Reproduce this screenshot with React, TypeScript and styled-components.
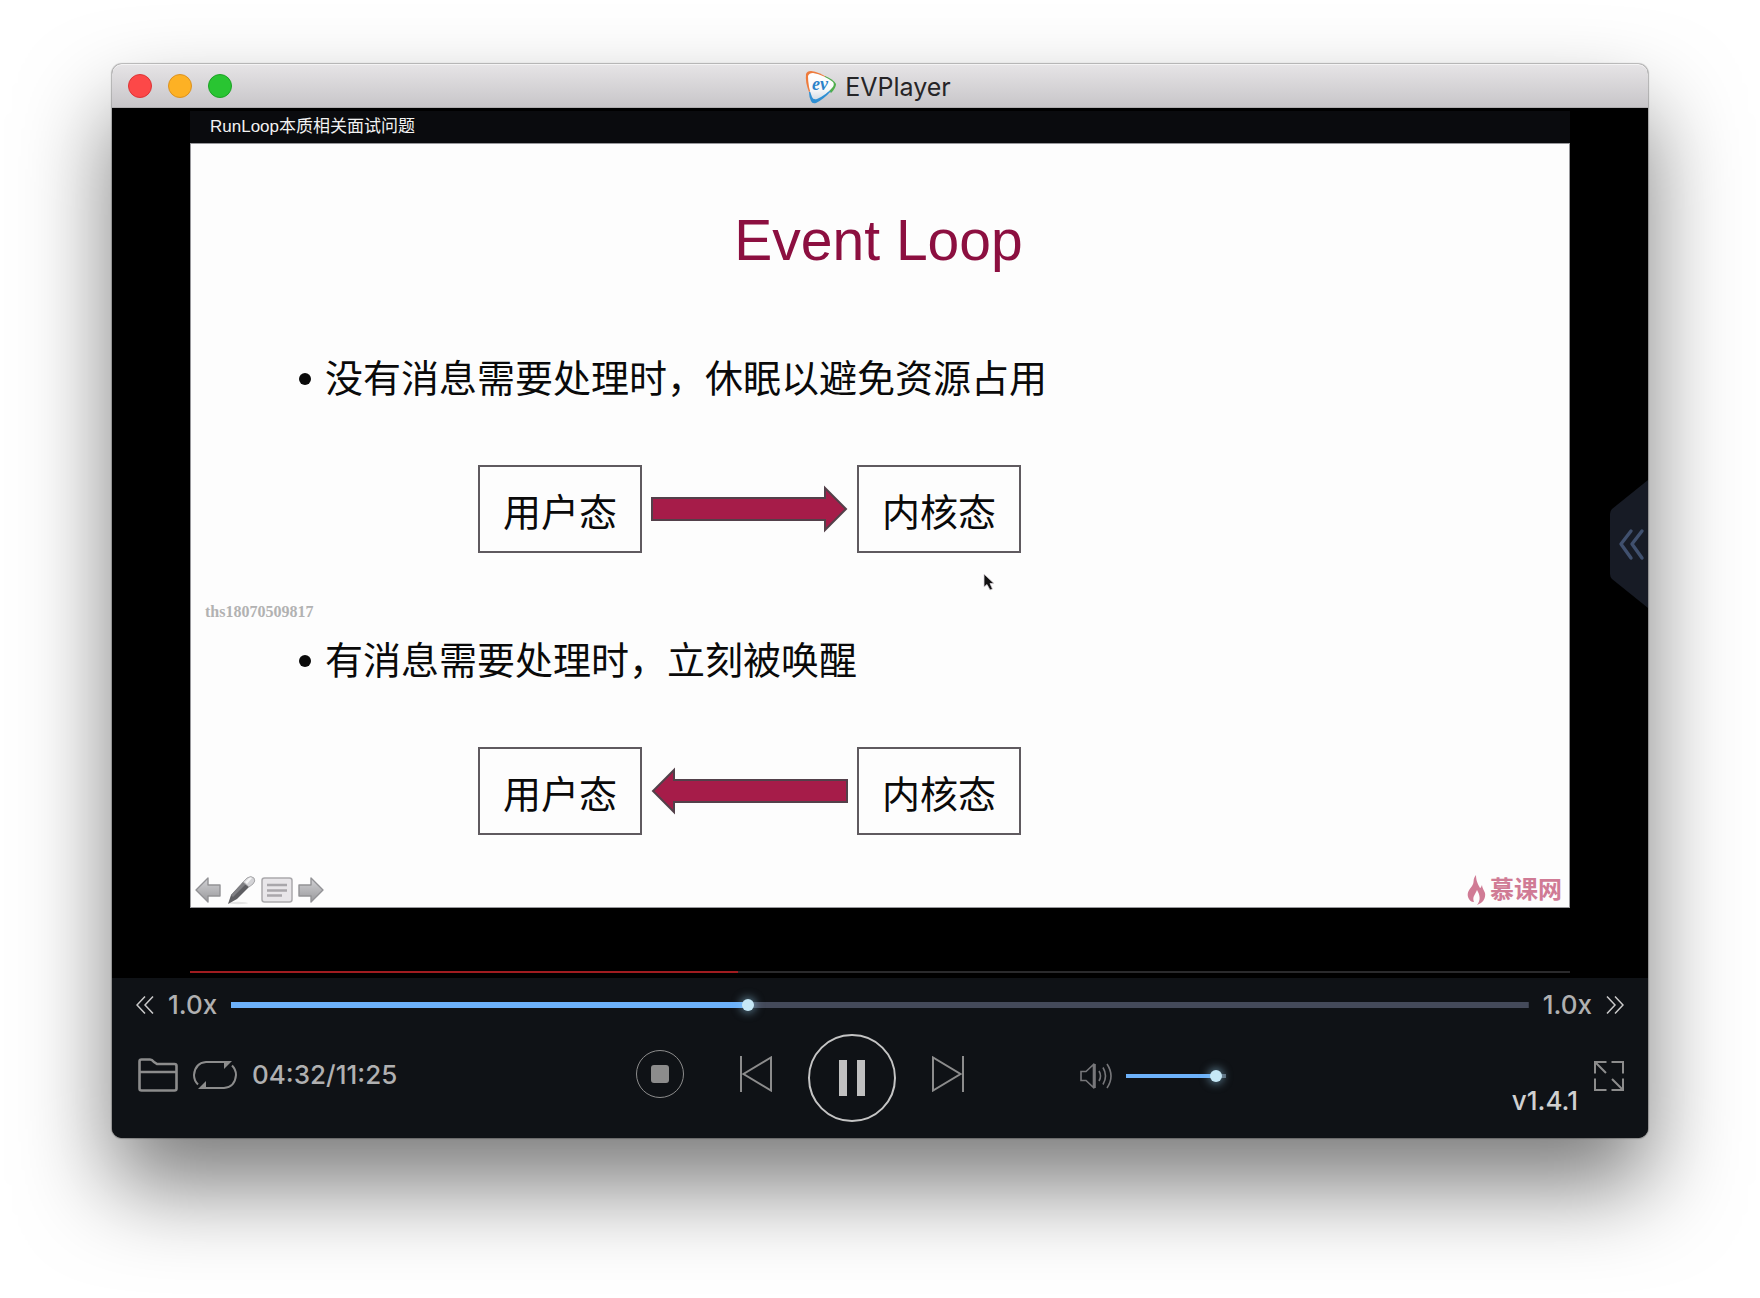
import React, { useState } from 'react';
import styled, { createGlobalStyle, css } from 'styled-components';

const uiFont = "Inter, Roboto, 'Noto Sans CJK SC', sans-serif";
const slideFont = "'Liberation Sans', 'Noto Sans CJK SC', sans-serif";

const GlobalStyle = createGlobalStyle`
  *, *::before, *::after { box-sizing: border-box; }
  body { margin: 0; background: #fff; font-family: ${uiFont}; }
  h1, h2, p, ul { margin: 0; padding: 0; font-weight: 400; }
  ul { list-style: none; }
`;

const Desktop = styled.main`
  padding: 64px 112px 160px;
`;

const PlayerWindow = styled.section`
  display: flex;
  flex-direction: column;
  border-radius: 10px;
  background: #000;
  box-shadow: 0 0 1px 1px rgba(0, 0, 0, 0.26), 0 48px 90px rgba(0, 0, 0, 0.52);
`;

const TitleBar = styled.header`
  display: grid;
  grid-template-columns: 1fr auto 1fr;
  align-items: center;
  height: 44px;
  padding: 0 16px;
  border-radius: 10px 10px 0 0;
  border-bottom: 1px solid #b0aeb0;
  background: linear-gradient(#e6e4e6, #c8c6c9);
  box-shadow: inset 0 1px 0 #f4f3f4;
`;

const Lights = styled.div`
  display: flex;
  gap: 16px;
`;

const Light = styled.button<{ $fill: string; $edge: string }>`
  width: 24px;
  height: 24px;
  padding: 0;
  border: 1px solid ${(p) => p.$edge};
  border-radius: 50%;
  background: ${(p) => p.$fill};
`;

const AppTitle = styled.h1`
  display: flex;
  align-items: center;
  gap: 8px;
  padding: 2px 4px 0 0;
  color: #262527;
  font-size: 25px;
  line-height: 32px;
`;

const Stage = styled.div`
  position: relative;
  padding: 3px 78px 5px;
  background: #000;
`;

const LessonTitle = styled.p`
  padding: 0 20px;
  background: #0a0b0e;
  color: #f2f2f2;
  font: 17px/32px ${slideFont};
`;

const Slide = styled.article`
  position: relative;
  display: flex;
  flex-direction: column;
  padding: 65px 8px 3px 5px;
  background: #fdfdfd;
  box-shadow: inset 0 0 0 1px #98989c;
  font-family: ${slideFont};
`;

const SlideTitle = styled.h2`
  color: #8c0f40;
  font-size: 57px;
  line-height: 64px;
  text-align: center;
`;

const Points = styled.ul`
  display: flex;
  flex-direction: column;
  gap: 80px;
  padding: 79px 104px 40px;
`;

const PointText = styled.p`
  display: flex;
  align-items: center;
  gap: 14px;
  color: #0a0a0a;
  font-size: 38px;
  line-height: 56px;

  &::before {
    content: '';
    width: 12px;
    height: 12px;
    border-radius: 50%;
    background: #0a0a0a;
  }
`;

const Flow = styled.div`
  display: flex;
  align-items: center;
  gap: 9px;
  margin-top: 58px;
  padding-left: 179px;
`;

const State = styled.div`
  display: flex;
  align-items: center;
  justify-content: center;
  width: 164px;
  height: 88px;
  padding-top: 7px;
  border: 2px solid #5f5a5f;
  color: #0a0a0a;
  font-size: 38px;
  line-height: 56px;
`;

const Arrow = styled.svg<{ $back?: boolean }>`
  width: 197px;
  height: 48px;
  fill: #a61c49;
  stroke: #53404a;
  stroke-width: 2px;
  ${(p) => p.$back && css`transform: scaleX(-1);`}
`;

const Watermark = styled.span`
  position: absolute;
  top: 459px;
  left: 15px;
  color: #b2b2b2;
  font: 700 16px/20px 'Liberation Serif', serif;
`;

const Pointer = styled.svg`
  position: absolute;
  top: 430px;
  left: 793px;
`;

const SlideFooter = styled.footer`
  display: flex;
  align-items: center;
  justify-content: space-between;
  height: 30px;
`;

const SlideTools = styled.div`
  display: flex;
  align-items: center;
  gap: 5px;
`;

const IconButton = styled.button`
  display: flex;
  flex: none;
  padding: 0;
  border: 0;
  background: none;
  color: #8c8c8c;
`;

const Brand = styled.a`
  display: flex;
  align-items: center;
  gap: 4px;
  color: #d07b95;
  font-size: 24px;
  font-weight: 700;
  line-height: 30px;
  text-decoration: none;
`;

const EmbeddedBar = styled.div`
  height: 2px;
  margin-top: 63px;
  background: #2a2a2c;
`;

const EmbeddedFill = styled.div`
  height: 2px;
  background: #a01c20;
`;

const DrawerTab = styled.button`
  position: absolute;
  top: 372px;
  right: 0;
  display: flex;
  padding: 0;
  border: 0;
  background: none;
`;

const Controls = styled.footer`
  display: flex;
  flex-direction: column;
  gap: 2px;
  padding: 0 24px 16px;
  border-radius: 0 0 10px 10px;
  background: #0f1216;
  color: #b0b0b1;
  font-size: 26px;
  font-weight: 500;
  line-height: 32px;
`;

const SeekRow = styled.div`
  display: flex;
  align-items: center;
  gap: 14px;
  height: 54px;
`;

const Seek = styled.input<{ $track: number; $rest: string }>`
  appearance: none;
  flex: 1;
  min-width: 0;
  height: 12px;
  margin: 0;
  background: linear-gradient(90deg, #6db2fb var(--fill), ${(p) => p.$rest} var(--fill))
    center / 100% ${(p) => p.$track}px no-repeat;

  &::-webkit-slider-thumb {
    appearance: none;
    width: 12px;
    height: 12px;
    border-radius: 50%;
    background: #c6e8f6;
    box-shadow: 0 0 8px 2px rgba(150, 205, 235, 0.5);
  }
`;

const ButtonRow = styled.div`
  display: grid;
  grid-template-columns: 25fr auto 33fr;
  height: 88px;
`;

const Library = styled.div`
  display: flex;
  align-items: center;
  gap: 15px;
  padding: 0 0 6px 2px;
`;

const Transport = styled.div`
  display: flex;
  align-items: center;
`;

const StepButton = styled(IconButton)<{ $before?: number; $after?: number }>`
  margin: 0 ${(p) => p.$after ?? 0}px 8px ${(p) => p.$before ?? 0}px;
`;

const PauseButton = styled.button`
  display: flex;
  align-items: center;
  justify-content: center;
  gap: 10px;
  width: 88px;
  height: 88px;
  padding: 0;
  border: 2px solid #c4c4c4;
  border-radius: 50%;
  background: none;
`;

const PauseBar = styled.span`
  width: 8px;
  height: 36px;
  background: #c0c0c0;
`;

const Output = styled.div`
  display: flex;
  align-items: center;
  justify-content: space-between;
  padding: 0 0 5px 116px;
`;

const Volume = styled.div`
  display: flex;
  align-items: center;
  gap: 14px;
  width: 146px;
`;

const WindowTools = styled.div`
  display: flex;
  align-items: center;
  align-self: stretch;
  gap: 16px;
`;

const Version = styled.span`
  align-self: flex-end;
  color: #d0d0d0;
`;

function Logo() {
  return (
    <svg width="32" height="34" viewBox="0 0 32 34" aria-hidden="true">
      <defs>
        <linearGradient id="pane" x1="0" y1="0" x2="0" y2="1">
          <stop offset="0" stopColor="#fff" />
          <stop offset="0.6" stopColor="#fafafa" />
          <stop offset="1" stopColor="#d4dde6" />
        </linearGradient>
      </defs>
      <path d="M1 4Q2 1 6 1Q14 2 23 8L4 22Q0 12 1 4Z" fill="#ee7b3c" />
      <path d="M20 6Q28 9 31 14Q31 18 26 23L18 14Z" fill="#4fae4c" />
      <path d="M4 22L26 21Q19 29 11 33Q7 34 6 31Q4 27 4 22Z" fill="#2e8fd3" />
      <path d="M3 6Q4 3 8 3Q19 5 28 12Q30 15 27 18Q21 25 12 29Q8 30 7 27Q3 17 3 6Z" fill="url(#pane)" />
      <text x="7" y="20" fill="#2b82c9" fontFamily="Liberation Serif, serif" fontSize="18" fontStyle="italic" fontWeight="700">ev</text>
    </svg>
  );
}

function Chevrons({ forward = false }: { forward?: boolean }) {
  return (
    <svg width="18" height="18" viewBox="0 0 18 18" fill="none" stroke="#c9c9c9" strokeWidth="1.5">
      <path d={forward ? 'M1 0.5L9 9L1 17.5M9 0.5L17 9L9 17.5' : 'M9 0.5L1 9L9 17.5M17 0.5L9 9L17 17.5'} />
    </svg>
  );
}

function FlowArrow({ back = false }: { back?: boolean }) {
  return (
    <Arrow viewBox="0 0 197 48" $back={back} aria-hidden="true">
      <path d="M1 13H174V3L195 24L174 45V35H1Z" />
    </Arrow>
  );
}

function PageArrow({ forward = false }: { forward?: boolean }) {
  return (
    <svg width="26" height="26" viewBox="0 0 26 26" fill="url(#steel)" stroke="#929295" strokeWidth="1.4" strokeLinejoin="round">
      <path d={forward ? 'M1 8H13V1L25 13L13 25V19H1Z' : 'M25 8H13V1L1 13L13 25V19H25Z'} />
    </svg>
  );
}

function SlideToolbar() {
  return (
    <SlideTools>
      <IconButton aria-label="上一页">
        <PageArrow />
      </IconButton>
      <IconButton aria-label="画笔">
        <svg width="30" height="30" viewBox="0 0 30 30">
          <defs>
            <linearGradient id="steel" x1="0" y1="0" x2="0" y2="1">
              <stop offset="0" stopColor="#d2d2d5" />
              <stop offset="1" stopColor="#99999c" />
            </linearGradient>
          </defs>
          <ellipse cx="12" cy="28" rx="10" ry="1.2" fill="#e4e4e4" />
          <path d="M2 29L5 20L17 7L23 12L11 24Z" fill="#5e5e62" />
          <path d="M5 20L17 7L20 9L7 22Z" fill="#808084" />
          <path d="M17 7L21 3Q25 0 28 3Q30 6 27 9L23 12Z" fill="#d3d3d6" stroke="#98989b" strokeWidth="0.8" />
          <path d="M19 7L23 3Q25 2 26 3L21 9Z" fill="#f5f5f5" />
        </svg>
      </IconButton>
      <IconButton aria-label="备注">
        <svg width="32" height="26" viewBox="0 0 32 26">
          <rect x="1" y="1" width="30" height="24" rx="2.5" fill="#e8e6e9" stroke="#aaa9ac" strokeWidth="1.5" />
          <path d="M6 8H26M6 13.500H26M6 18.500H21" stroke="#a9a7ab" strokeWidth="2.4" />
        </svg>
      </IconButton>
      <IconButton aria-label="下一页">
        <PageArrow forward />
      </IconButton>
    </SlideTools>
  );
}

const points = [
  { text: '没有消息需要处理时，休眠以避免资源占用', back: false },
  { text: '有消息需要处理时，立刻被唤醒', back: true },
];

const clock = (s: number) =>
  `${String(Math.floor(s / 60)).padStart(2, '0')}:${String(s % 60).padStart(2, '0')}`;

const fillVar = (value: number, max: number) =>
  ({ '--fill': `${(value / max) * 100}%` }) as React.CSSProperties;

const DURATION = 685;

export default function App() {
  const [time, setTime] = useState(272);
  const [volume, setVolume] = useState(95);

  return (
    <Desktop>
      <GlobalStyle />
      <PlayerWindow>
        <TitleBar>
          <Lights>
            <Light $fill="#fc4848" $edge="#dd3436" aria-label="关闭" />
            <Light $fill="#fdb124" $edge="#dc9220" aria-label="最小化" />
            <Light $fill="#29c532" $edge="#1ca225" aria-label="缩放" />
          </Lights>
          <AppTitle>
            <Logo />
            EVPlayer
          </AppTitle>
        </TitleBar>

        <Stage>
          <LessonTitle>RunLoop本质相关面试问题</LessonTitle>
          <Slide>
            <SlideTitle>Event Loop</SlideTitle>
            <Points>
              {points.map((point) => (
                <li key={point.text}>
                  <PointText>{point.text}</PointText>
                  <Flow>
                    <State>用户态</State>
                    <FlowArrow back={point.back} />
                    <State>内核态</State>
                  </Flow>
                </li>
              ))}
            </Points>
            <SlideFooter>
              <SlideToolbar />
              <Brand href="#">
                <svg width="19" height="30" viewBox="0 0 19 30" fill="currentColor" aria-hidden="true">
                  <path d="M9 0C5 5 8 7 5 11C2 15 0 17 1 22C2 25 4 27 7 27C5 22 8 20 10 15C13 20 14 25 10 30C16 28 19 23 18 18C17 15 15 13 15 10C14 12 14 13 13 13C11 9 9 6 9 0Z" />
                </svg>
                慕课网
              </Brand>
            </SlideFooter>
            <Watermark>ths18070509817</Watermark>
            <Pointer width="14" height="20" viewBox="0 0 14 20" aria-hidden="true">
              <path d="M1 1V14L4 11.500L7 17L9.500 16L7 10.500H11Z" fill="#111" stroke="#d8d2d8" strokeWidth="0.8" />
            </Pointer>
          </Slide>
          <EmbeddedBar>
            <EmbeddedFill style={{ width: `${(time / DURATION) * 100}%` }} />
          </EmbeddedBar>
          <DrawerTab aria-label="展开播放列表">
            <svg width="38" height="128" viewBox="0 0 38 128">
              <path d="M38 0V128L2 99Q0 97 0 94V34Q0 31 2 29Z" fill="#171b25" />
              <path d="M21 51L11 64L21 78M32 51L22 64L32 78" fill="none" stroke="#40506e" strokeWidth="3.4" strokeLinecap="round" strokeLinejoin="round" />
            </svg>
          </DrawerTab>
        </Stage>

        <Controls>
          <SeekRow>
            <IconButton aria-label="减速">
              <Chevrons />
            </IconButton>
            <span>1.0x</span>
            <Seek
              type="range"
              aria-label="播放进度"
              min={0}
              max={DURATION}
              value={time}
              onChange={(e) => setTime(Number(e.target.value))}
              $track={6}
              $rest="#444a5a"
              style={fillVar(time, DURATION)}
            />
            <span>1.0x</span>
            <IconButton aria-label="加速">
              <Chevrons forward />
            </IconButton>
          </SeekRow>

          <ButtonRow>
            <Library>
              <IconButton aria-label="打开文件">
                <svg width="40" height="34" viewBox="0 0 40 34" fill="none" stroke="currentColor" strokeWidth="2.600" strokeLinejoin="round">
                  <path d="M1.500 14V3.500Q1.500 1.500 3.500 1.500H12Q14 1.500 16 4L19 6H36.500Q38.500 6 38.500 8V14M1.500 14H38.500V30.500Q38.500 32.500 36.500 32.500H3.500Q1.500 32.500 1.500 30.500V14" />
                </svg>
              </IconButton>
              <IconButton aria-label="循环播放">
                <svg width="44" height="30" viewBox="0 0 44 30" fill="none" stroke="currentColor" strokeWidth="2">
                  <path d="M5 24.500Q1 20.500 1 15Q2 3 13 2H37M39 5.500Q43 9.500 43 15Q42 27 31 28H7" />
                  <path d="M31 9V1H39ZM13 21V29H5Z" fill="currentColor" stroke="none" />
                </svg>
              </IconButton>
              <span>
                {clock(time)}/{clock(DURATION)}
              </span>
            </Library>

            <Transport>
              <StepButton $after={56} aria-label="停止">
                <svg width="48" height="48" viewBox="0 0 48 48">
                  <circle cx="24" cy="24" r="23.500" fill="none" stroke="currentColor" />
                  <rect x="15" y="15" width="18" height="18" rx="3" fill="currentColor" />
                </svg>
              </StepButton>
              <StepButton $after={36} aria-label="上一个">
                <svg width="32" height="36" viewBox="0 0 32 36" fill="none" stroke="currentColor" strokeWidth="2">
                  <path d="M1 0V36M31 1.500V34.500L3.500 18Z" />
                </svg>
              </StepButton>
              <PauseButton aria-label="暂停">
                <PauseBar />
                <PauseBar />
              </PauseButton>
              <StepButton $before={36} aria-label="下一个">
                <svg width="32" height="36" viewBox="0 0 32 36" fill="none" stroke="currentColor" strokeWidth="2">
                  <path d="M31 0V36M1 1.500V34.500L28.500 18Z" />
                </svg>
              </StepButton>
            </Transport>

            <Output>
              <Volume>
                <IconButton aria-label="静音">
                  <svg width="32" height="26" viewBox="0 0 32 26" fill="none" stroke="#77777a" strokeWidth="1.600">
                    <path d="M1 8.500H6L13.500 1.500V24.500L6 17.500H1ZM15 1V25" />
                    <path d="M19 8Q22 13 19 18M23 4.500Q28 13 23 21.500M27 1Q35 13 27 25" />
                  </svg>
                </IconButton>
                <Seek
                  type="range"
                  aria-label="音量"
                  min={0}
                  max={100}
                  value={volume}
                  onChange={(e) => setVolume(Number(e.target.value))}
                  $track={4}
                  $rest="#5a6774"
                  style={fillVar(volume, 100)}
                />
              </Volume>
              <WindowTools>
                <Version>v1.4.1</Version>
                <IconButton aria-label="全屏">
                  <svg width="30" height="30" viewBox="0 0 30 30" fill="none" stroke="currentColor" strokeWidth="2">
                    <path d="M12.500 1H1V12.500M17.500 1H29V12.500M12.500 29H1V17.500M17.500 29H29V17.500M1 1L12 12M29 29L18 18" />
                  </svg>
                </IconButton>
              </WindowTools>
            </Output>
          </ButtonRow>
        </Controls>
      </PlayerWindow>
    </Desktop>
  );
}
